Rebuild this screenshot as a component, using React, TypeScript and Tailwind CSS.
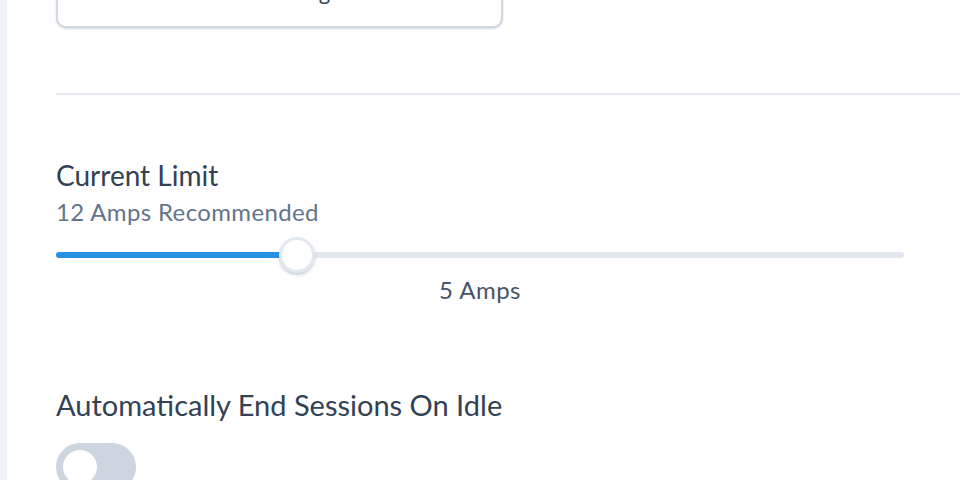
import React from "react";

const font = { fontFamily: "Lato, 'Noto Sans', 'Liberation Sans', sans-serif" };

function Slider({ value, min, max }: { value: number; min: number; max: number }) {
  const pct = ((value - min) / (max - min)) * 100;
  return (
    <div className="relative h-[36px] w-[848px]">
      <div className="absolute left-0 right-0 top-[15px] h-[6px] rounded-full bg-[#e3e8f0]" />
      <div
        className="absolute left-0 top-[15px] h-[6px] rounded-l-full bg-[#2491e3]"
        style={{ width: `${pct}%` }}
      />
      <div
        className="absolute top-0 h-[36px] w-[36px] -translate-x-1/2 rounded-full border-[3px] border-[#e3e8f0] bg-white shadow-[0_2px_3px_rgba(100,116,139,0.35)]"
        style={{ left: `${pct}%` }}
      />
    </div>
  );
}

export default function App() {
  return (
    <div className="flex h-[480px] overflow-hidden bg-white" style={font}>
      <div className="w-[7px] shrink-0 bg-[#eef1f7]" />
      <div className="flex-1 pl-[49px]">
        <button className="-mt-[46px] flex h-[74px] w-[447px] items-center justify-center rounded-[10px] border-2 border-[#cfd8e3] bg-white text-[22px] text-[#334155] shadow-[0_1px_2px_rgba(148,163,184,0.4)]">
          Edit Settings
        </button>

        <div className="mt-[65px] h-[2px] bg-[#e4e8f1]" />

        <div className="mt-[63px] text-[28px] leading-[34px] text-[#334155]">Current Limit</div>
        <div className="mt-[6px] text-[24px] leading-[28px] tracking-[0.015em] text-[#64748b]">
          12 Amps Recommended
        </div>

        <div className="mt-[11px]">
          <Slider value={5} min={0} max={17.6} />
        </div>
        <div className="mt-[3px] w-[848px] text-center text-[24px] leading-[28px] tracking-[0.02em] text-[#475569]">
          5 Amps
        </div>

        <div className="mt-[84px] text-[29px] leading-[34px] text-[#334155]">
          Automatically End Sessions On Idle
        </div>

        <div className="mt-[21px] flex h-[48px] w-[80px] items-center rounded-full bg-[#cdd5e1] px-[7px]">
          <div className="h-[34px] w-[34px] rounded-full bg-white" />
        </div>
      </div>
    </div>
  );
}
